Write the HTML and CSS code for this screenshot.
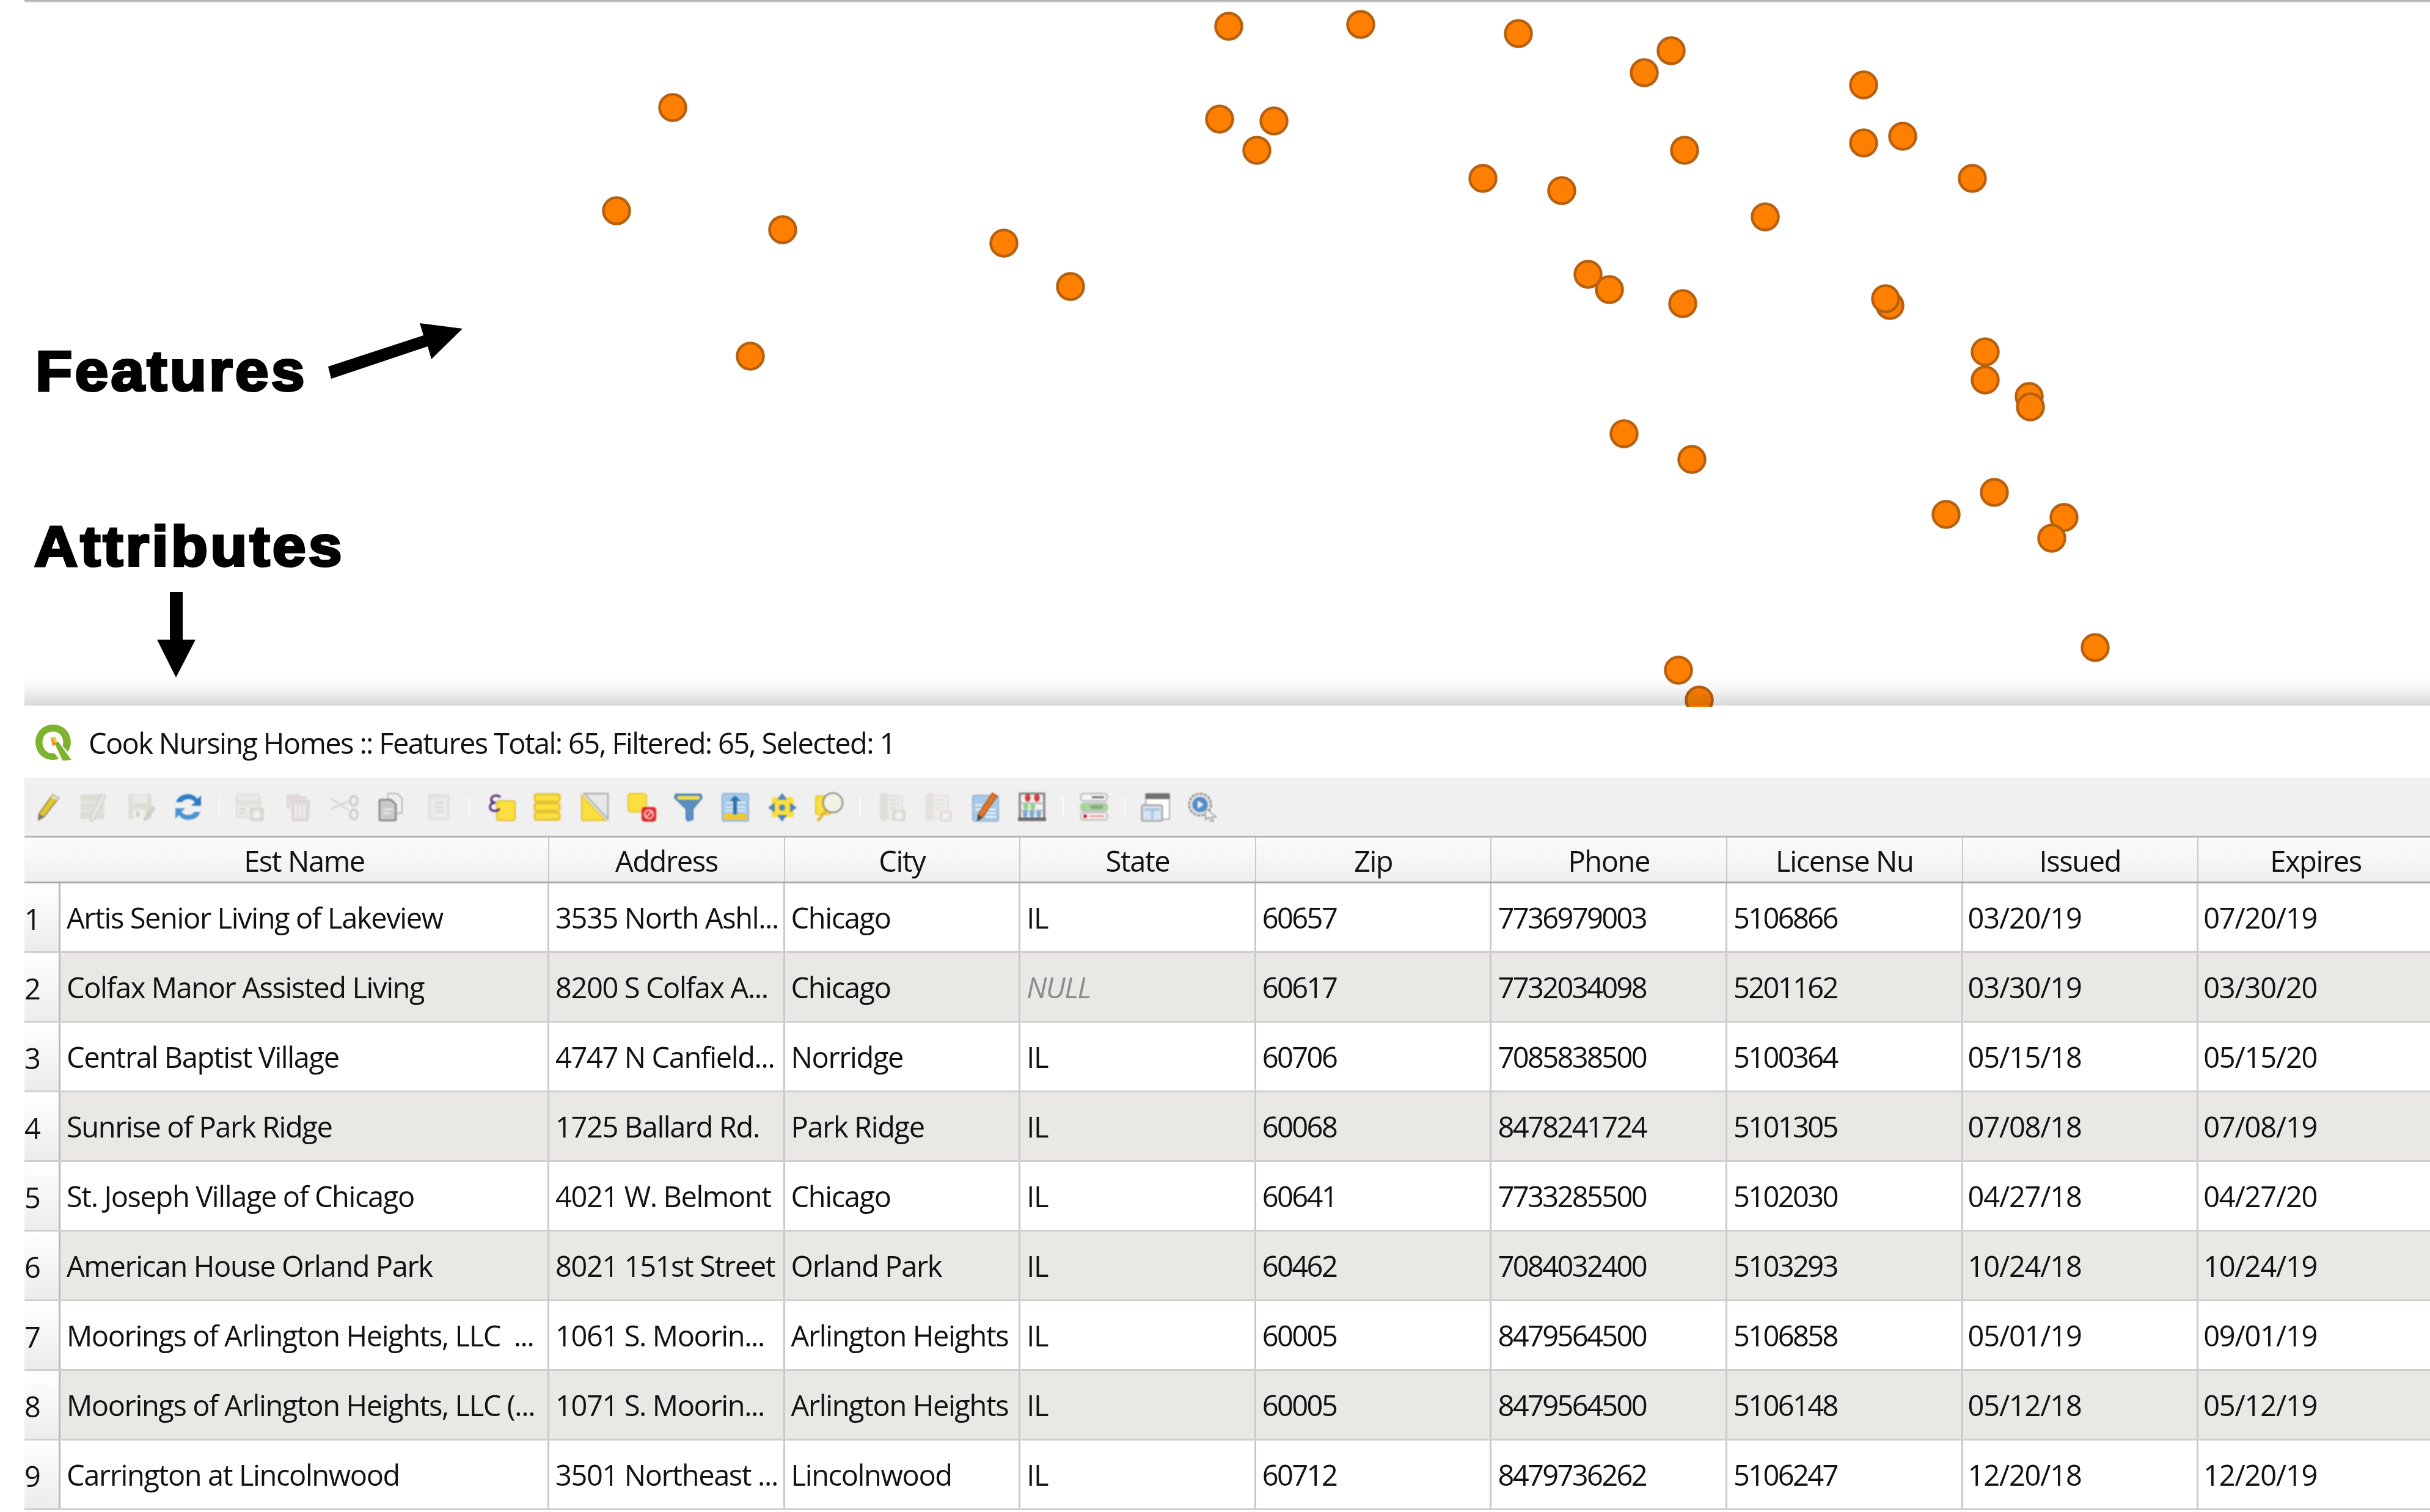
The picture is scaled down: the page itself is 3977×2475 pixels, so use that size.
FILE: index.html
```html
<!DOCTYPE html>
<html lang="en">
<head>
<meta charset="utf-8">
<title>Cook Nursing Homes</title>
<link rel="stylesheet" href="styles.css">
</head>
<body>
<div class="page">
  <section class="map">
    <svg class="map-points" viewBox="0 0 3977 1157" width="3977" height="1157" aria-hidden="true">
      <g class="points">
        <circle cx="2011" cy="43" r="21.500"/><circle cx="2227" cy="40" r="21.500"/><circle cx="2485" cy="55" r="21.500"/>
        <circle cx="2735" cy="83" r="21.500"/><circle cx="2691" cy="119" r="21.500"/><circle cx="3050" cy="139" r="21.500"/>
        <circle cx="1101" cy="176" r="21.500"/><circle cx="1996" cy="195" r="21.500"/><circle cx="2085" cy="198" r="21.500"/>
        <circle cx="2057" cy="246" r="21.500"/><circle cx="3050" cy="234" r="21.500"/><circle cx="3114" cy="223" r="21.500"/>
        <circle cx="2757" cy="246" r="21.500"/><circle cx="2427" cy="292" r="21.500"/><circle cx="2556" cy="312" r="21.500"/>
        <circle cx="3228" cy="292" r="21.500"/><circle cx="1009" cy="345" r="21.500"/><circle cx="1281" cy="376" r="21.500"/>
        <circle cx="2889" cy="355" r="21.500"/><circle cx="1643" cy="398" r="21.500"/><circle cx="1752" cy="469" r="21.500"/>
        <circle cx="2599" cy="449" r="21.500"/><circle cx="2634" cy="474" r="21.500"/><circle cx="2754" cy="497" r="21.500"/>
        <circle cx="3093" cy="500" r="21.500"/><circle cx="3086" cy="489" r="21.500"/><circle cx="1228" cy="583" r="21.500"/>
        <circle cx="3249" cy="576" r="21.500"/><circle cx="3249" cy="622" r="21.500"/><circle cx="3321" cy="649" r="21.500"/>
        <circle cx="3323" cy="666" r="21.500"/><circle cx="2658" cy="710" r="21.500"/><circle cx="2769" cy="752" r="21.500"/>
        <circle cx="3264" cy="806" r="21.500"/><circle cx="3185" cy="842" r="21.500"/><circle cx="3378" cy="847" r="21.500"/>
        <circle cx="3358" cy="881" r="21.500"/><circle cx="3429" cy="1060" r="21.500"/><circle cx="2747" cy="1097" r="21.500"/>
        <circle cx="2781" cy="1146" r="21.500"/>
      </g>
    </svg>
    <div class="map-shade"></div>
    <strong class="note note-features">Features</strong>
    <strong class="note note-attributes">Attributes</strong>
    <svg class="arrows" viewBox="0 0 800 1120" width="800" height="1120" aria-hidden="true">
      <polygon points="537,600 542,620 700,567 706,588 757,538 687,529 693,549"/>
      <polygon points="278,969 299,969 299,1047 320,1047 288,1109 257,1047 278,1047"/>
    </svg>
  </section>

  <section class="attr">
    <header class="attr-title">
      <svg class="qgis" viewBox="0 0 62 60" width="64" height="62" aria-hidden="true">
        <path d="M31 2C15 2 3 14 3 30s12 28 28 28c3 0 6-.5 9-1.500l-7-9c-1 .2-2 .3-3 .3-9 0-16-8-16-18S21 13 31 13s16 8 16 17c0 2-.4 4-1 6l8 9c3-4 5-9 5-15C59 14 47 2 31 2z" fill="#7fb22e"/>
        <path d="M27 22l9 11-6 3z" fill="#f0852a"/>
        <path d="M33 31l6-2 21 29-14 1z" fill="#7fb22e"/>
        <path d="M27 22l6 9 4-3-3-7z" fill="#f3c33c"/>
      </svg>
      <span class="title-text">Cook Nursing Homes :: Features Total: 65, Filtered: 65, Selected: 1</span>
    </header>

    <div class="toolbar">
      <svg class="ic" viewBox="0 0 51 48"><path d="M34 4l10 5-24 31-9 5 1-10z" fill="#e6c92e" stroke="#8f8446" stroke-width="2"/><path d="M11 35l9 5-9 6z" fill="#777"/><path d="M34 4l10 5-3 4-10-5z" fill="#ddd"/></svg>
      <svg class="ic dim" viewBox="0 0 51 48"><g fill="#dddcd2" stroke="#cfcec4"><rect x="3" y="4" width="38" height="11" rx="2"/><rect x="3" y="18" width="38" height="11" rx="2"/><rect x="3" y="32" width="38" height="11" rx="2"/></g><path d="M38 2l6 4-18 38-7 4 0-8z" fill="#e9e7e4" stroke="#c4c2bd" stroke-width="1.500"/></svg>
      <svg class="ic dim" viewBox="0 0 51 48"><rect x="4" y="3" width="38" height="41" rx="3" fill="#dbdad4"/><rect x="11" y="5" width="24" height="13" fill="#eaeae6"/><rect x="12" y="28" width="20" height="16" fill="#efefeb"/><rect x="17" y="31" width="5" height="9" fill="#c8c7c1"/><path d="M43 22l6 4-14 20-6 2 1-7z" fill="#cbc9c2"/></svg>
      <svg class="ic" viewBox="0 0 51 48"><path d="M25 3c7 0 12 3 15 8l6-6v17H30l6-6c-2-3-6-5-11-5-5 0-8 2-10 5H5C8 8 15 3 25 3z" fill="#2d7bc4"/><path d="M25 45c-7 0-12-3-15-8l-6 6V26h16l-6 6c2 3 6 5 11 5 5 0 8-2 10-5h10c-3 8-10 13-20 13z" fill="#4b92d4"/></svg>
      <i class="sep"></i>
      <svg class="ic dim" viewBox="0 0 51 48"><rect x="3" y="3" width="38" height="38" rx="3" fill="#e9e9e7" stroke="#d7d7d3" stroke-width="2"/><rect x="1" y="13" width="44" height="8" rx="2" fill="#dfded6"/><path d="M8 27h10M8 33h10" stroke="#cfcfca" stroke-width="3"/><rect x="25" y="25" width="23" height="22" rx="2" fill="#d6d5cb"/><path d="M36 29v14M29 36h14M31 31l10 10M41 31L31 41" stroke="#f4f4f0" stroke-width="3"/></svg>
      <svg class="ic dim" viewBox="0 0 51 48"><path d="M8 3h20l4 4h10v5H13v15H8z" fill="#dcd6d4"/><path d="M15 14h30v2l-2 30H18l-2-30z" fill="#e0d8d8" stroke="#d2c9c9" stroke-width="2"/><path d="M23 20v22M30 20v22M37 20v22" stroke="#f3f1f1" stroke-width="3"/></svg>
      <svg class="ic dim" viewBox="0 0 51 48"><path d="M4 10l28 19M4 27l28-12" stroke="#d4d4d0" stroke-width="3" fill="none"/><g fill="none" stroke="#c7c3c3" stroke-width="3.500"><ellipse cx="41" cy="14" rx="6" ry="8"/><ellipse cx="41" cy="36" rx="6" ry="8"/></g></svg>
      <svg class="ic" viewBox="0 0 51 48"><path d="M20 2h15l8 8v24H20z" fill="#f0f0f0" stroke="#b5b5b5" stroke-width="2"/><path d="M8 12h17l8 8v24a2 2 0 0 1-2 2H8a2 2 0 0 1-2-2V14a2 2 0 0 1 2-2z" fill="#c9c9c9" stroke="#7d7d7d" stroke-width="2.500"/><path d="M12 28h16M12 34h12" stroke="#eee" stroke-width="2.500"/></svg>
      <svg class="ic dim" viewBox="0 0 51 48"><rect x="8" y="2" width="36" height="44" rx="4" fill="#e0e0de"/><rect x="14" y="9" width="25" height="33" fill="#ecebe9"/><path d="M20 17h13M20 24h13M20 31h13" stroke="#d4d4d1" stroke-width="3"/></svg>
      <i class="sep"></i>
      <svg class="ic" viewBox="0 0 51 48"><rect x="20" y="14" width="30" height="32" rx="3" fill="#fbde3f" stroke="#e0bd2c" stroke-width="2"/><path d="M25 7c-5-3-13-2-14 4-.6 4 3 6 7 6-5 0-9 2-9 7 0 7 9 8 15 4" fill="none" stroke="#5a2d82" stroke-width="3.500" stroke-linecap="round"/></svg>
      <svg class="ic" viewBox="0 0 51 48"><g fill="#fbde3f" stroke="#e2bf2e" stroke-width="3"><rect x="5" y="3" width="41" height="12" rx="3"/><rect x="5" y="18" width="41" height="12" rx="3"/><rect x="5" y="33" width="41" height="12" rx="3"/></g></svg>
      <svg class="ic" viewBox="0 0 51 48"><path d="M9 2h39v42z" fill="#e8e8e8" stroke="#aaa" stroke-width="2.500"/><path d="M5 5l39 41H7a2 2 0 0 1-2-2z" fill="#fbde3f" stroke="#e2bf2e" stroke-width="2"/></svg>
      <svg class="ic" viewBox="0 0 51 48"><rect x="4" y="2" width="30" height="30" rx="4" fill="#fbde3f" stroke="#e5c533" stroke-width="2"/><rect x="26" y="24" width="24" height="24" rx="5" fill="#dc2a2e"/><circle cx="38" cy="36" r="7" fill="none" stroke="#f6c9c9" stroke-width="2.500"/><path d="M33 41l10-10" stroke="#f6c9c9" stroke-width="2.500"/></svg>
      <svg class="ic" viewBox="0 0 51 48"><path d="M5 3h41l2 6-15 18v17l-8 3-3-4V27L3 9z" fill="#5b8fc2" stroke="#4d7fb0" stroke-width="2"/><rect x="8" y="6" width="36" height="6" fill="#f7e043"/></svg>
      <svg class="ic" viewBox="0 0 51 48"><rect x="4" y="2" width="43" height="45" rx="3" fill="#a9c9e9" stroke="#8fb3d6" stroke-width="2"/><rect x="6" y="35" width="39" height="10" fill="#ecca35"/><path d="M9 17h33M9 24h33M9 30h33" stroke="#e8f0f8" stroke-width="2"/><path d="M25 5l9 9h-6v22h-6V14h-6z" fill="#2f6ea8"/></svg>
      <svg class="ic" viewBox="0 0 51 48"><rect x="8" y="8" width="36" height="33" rx="3" fill="#fbde3f"/><g fill="#4f84bd"><path d="M25 1l8 11H17z"/><path d="M25 48l8-11H17z"/><path d="M2 25l11-8v16z"/><path d="M49 25l-11-8v16z"/></g><circle cx="25" cy="25" r="5" fill="#4f84bd"/></svg>
      <svg class="ic" viewBox="0 0 51 48"><rect x="3" y="6" width="24" height="30" rx="3" fill="#fbde3f" stroke="#e3c02f" stroke-width="2"/><circle cx="31" cy="17" r="16" fill="#f3f2e6" stroke="#8a8a7e" stroke-width="2.500"/><path d="M20 30L6 47" stroke="#e3b92d" stroke-width="4.500"/></svg>
      <i class="sep"></i>
      <svg class="ic dim" viewBox="0 0 51 48"><rect x="8" y="5" width="36" height="38" fill="#e9e9e7" stroke="#dcdcd8" stroke-width="2"/><rect x="9" y="1" width="11" height="46" rx="4" fill="#dedcd6"/><path d="M24 12h15M24 19h15M24 26h8" stroke="#d6d6d2" stroke-width="2"/><rect x="28" y="29" width="21" height="18" rx="2" fill="#d6d5cb"/><path d="M38 31v14M31 38h14M33 33l10 10M43 33L33 43" stroke="#f5f5f1" stroke-width="2.500"/></svg>
      <svg class="ic dim" viewBox="0 0 51 48"><rect x="6" y="5" width="36" height="38" fill="#ececea" stroke="#dedcdc" stroke-width="2"/><rect x="7" y="1" width="11" height="46" rx="4" fill="#e4dfdd"/><path d="M22 12h15M22 19h15M22 26h8" stroke="#dcdcd8" stroke-width="2"/><rect x="28" y="30" width="20" height="18" rx="2" fill="#e3d9d8"/><path d="M33 34l10 10M43 34L33 44" stroke="#f8f6f6" stroke-width="4"/></svg>
      <svg class="ic" viewBox="0 0 51 48"><rect x="5" y="5" width="42" height="42" rx="3" fill="#a9c9e9" stroke="#8fb3d6" stroke-width="2"/><path d="M9 21h12M9 28h10M26 34h17M26 40h17M30 28h13" stroke="#f1f6fb" stroke-width="2.500"/><path d="M37 1l8 5-24 35-8 5 1-10z" fill="#e4762a" stroke="#9d4f1a" stroke-width="1.500"/><path d="M13 36l8 5-8 6z" fill="#444"/></svg>
      <svg class="ic" viewBox="0 0 51 48"><rect x="5" y="2" width="40" height="42" fill="#efefef" stroke="#777" stroke-width="3"/><rect x="2" y="41" width="46" height="6" fill="#6c6c6c"/><path d="M5 18h40M5 30h40" stroke="#aaa" stroke-width="2"/><g fill="#d03b3d"><ellipse cx="18" cy="9" rx="4.500" ry="6.500"/><ellipse cx="33" cy="9" rx="4.500" ry="6.500"/></g><g fill="#8fd088"><ellipse cx="15" cy="23" rx="4" ry="6"/><ellipse cx="26" cy="23" rx="4" ry="6"/></g><g fill="#7aa9d6"><ellipse cx="14" cy="35" rx="4" ry="6"/><ellipse cx="25" cy="35" rx="4" ry="6"/><ellipse cx="36" cy="35" rx="4" ry="6"/></g></svg>
      <i class="sep"></i>
      <svg class="ic" viewBox="0 0 51 48"><g stroke="#bdbdbd" stroke-width="2.500"><rect x="4" y="2" width="43" height="12" rx="4" fill="#f5f5f5"/><rect x="4" y="18" width="43" height="12" rx="4" fill="#9fdc93"/><rect x="4" y="33" width="43" height="12" rx="4" fill="#f5f5f5"/></g><path d="M22 8h20" stroke="#666" stroke-width="3"/><path d="M20 24h20" stroke="#8aa585" stroke-width="6"/><circle cx="11" cy="39" r="3" fill="#c4161c"/><path d="M17 39h25" stroke="#f39aa0" stroke-width="3"/></svg>
      <i class="sep"></i>
      <svg class="ic" viewBox="0 0 51 48"><rect x="9" y="2" width="39" height="42" rx="2" fill="#fff" stroke="#aaa" stroke-width="2"/><rect x="9" y="2" width="39" height="9" fill="#707070"/><rect x="3" y="21" width="33" height="26" rx="3" fill="#d7e5f2" stroke="#a5a5a5" stroke-width="3"/><path d="M7 28h25M20 28v16" stroke="#a6c4e0" stroke-width="4"/></svg>
      <svg class="ic" viewBox="0 0 51 48"><circle cx="21" cy="20" r="18" fill="#e3e3e3" stroke="#8c8c8c" stroke-width="3" stroke-dasharray="5 2"/><circle cx="21" cy="20" r="12.500" fill="#4f8cc9"/><path d="M17 13l10 7-10 7z" fill="#eef"/><path d="M30 26l17 14-8 1 4 6-4 1-4-7-5 4z" fill="#f4f4f4" stroke="#8b8b8b" stroke-width="1.500"/></svg>
    </div>

    <div class="grid">
      <div class="row head">
        <div class="corner"></div>
        <div class="th">Est Name</div><div class="th">Address</div><div class="th">City</div><div class="th">State</div><div class="th">Zip</div><div class="th">Phone</div><div class="th">License Nu</div><div class="th">Issued</div><div class="th">Expires</div>
      </div>
      <div class="row">
        <div class="num">1</div><div class="td">Artis Senior Living of Lakeview</div><div class="td">3535 North Ashl...</div><div class="td">Chicago</div><div class="td">IL</div><div class="td">60657</div><div class="td">7736979003</div><div class="td">5106866</div><div class="td">03/20/19</div><div class="td">07/20/19</div>
      </div>
      <div class="row alt">
        <div class="num">2</div><div class="td">Colfax Manor Assisted Living</div><div class="td">8200 S Colfax A...</div><div class="td">Chicago</div><div class="td null">NULL</div><div class="td">60617</div><div class="td">7732034098</div><div class="td">5201162</div><div class="td">03/30/19</div><div class="td">03/30/20</div>
      </div>
      <div class="row">
        <div class="num">3</div><div class="td">Central Baptist Village</div><div class="td">4747 N Canfield...</div><div class="td">Norridge</div><div class="td">IL</div><div class="td">60706</div><div class="td">7085838500</div><div class="td">5100364</div><div class="td">05/15/18</div><div class="td">05/15/20</div>
      </div>
      <div class="row alt">
        <div class="num">4</div><div class="td">Sunrise of Park Ridge</div><div class="td">1725 Ballard Rd.</div><div class="td">Park Ridge</div><div class="td">IL</div><div class="td">60068</div><div class="td">8478241724</div><div class="td">5101305</div><div class="td">07/08/18</div><div class="td">07/08/19</div>
      </div>
      <div class="row">
        <div class="num">5</div><div class="td">St. Joseph Village of Chicago</div><div class="td">4021 W. Belmont</div><div class="td">Chicago</div><div class="td">IL</div><div class="td">60641</div><div class="td">7733285500</div><div class="td">5102030</div><div class="td">04/27/18</div><div class="td">04/27/20</div>
      </div>
      <div class="row alt">
        <div class="num">6</div><div class="td">American House Orland Park</div><div class="td">8021 151st Street</div><div class="td">Orland Park</div><div class="td">IL</div><div class="td">60462</div><div class="td">7084032400</div><div class="td">5103293</div><div class="td">10/24/18</div><div class="td">10/24/19</div>
      </div>
      <div class="row">
        <div class="num">7</div><div class="td">Moorings of Arlington Heights, LLC &nbsp;...</div><div class="td">1061 S. Moorin...</div><div class="td">Arlington Heights</div><div class="td">IL</div><div class="td">60005</div><div class="td">8479564500</div><div class="td">5106858</div><div class="td">05/01/19</div><div class="td">09/01/19</div>
      </div>
      <div class="row alt">
        <div class="num">8</div><div class="td">Moorings of Arlington Heights, LLC (...</div><div class="td">1071 S. Moorin...</div><div class="td">Arlington Heights</div><div class="td">IL</div><div class="td">60005</div><div class="td">8479564500</div><div class="td">5106148</div><div class="td">05/12/18</div><div class="td">05/12/19</div>
      </div>
      <div class="row">
        <div class="num">9</div><div class="td">Carrington at Lincolnwood</div><div class="td">3501 Northeast ...</div><div class="td">Lincolnwood</div><div class="td">IL</div><div class="td">60712</div><div class="td">8479736262</div><div class="td">5106247</div><div class="td">12/20/18</div><div class="td">12/20/19</div>
      </div>
    </div>
  </section>
</div>
</body>
</html>
```
FILE: styles.css
```css
* { box-sizing: border-box; }
html, body { margin: 0; padding: 0; background: #fff; }
.page {
  width: 3977px;
  height: 2475px;
  overflow: hidden;
  display: flex;
  flex-direction: column;
  font-family: "Open Sans", "Liberation Sans", sans-serif;
  font-size: 47px;
  letter-spacing: -1.4px;
  color: #111;
}

/* Map canvas */
.map {
  position: relative;
  height: 1157px;
  flex: none;
  overflow: hidden;
}
.map::before {
  content: "";
  position: absolute;
  left: 40px;
  right: 0;
  top: 0;
  height: 4px;
  background: linear-gradient(#a9a9a9, #d9d9d9);
}
.map-points { position: absolute; left: 0; top: 0; }
.points {
  fill: #ff8000;
  stroke: #b8600f;
  stroke-width: 4.5px;
  filter: blur(.7px);
}
.map-shade {
  position: absolute;
  left: 40px;
  right: 0;
  bottom: 2px;
  height: 45px;
  background: linear-gradient(#fff, #f3f3f3 45%, #d8d8d8);
  mix-blend-mode: multiply;
}
.note {
  position: absolute;
  font-family: "Liberation Sans", sans-serif;
  font-weight: 700;
  font-size: 93px;
  line-height: 93px;
  letter-spacing: 4px;
  white-space: nowrap;
  color: #000;
  -webkit-text-stroke: 4px #000;
  transform-origin: left center;
  transform: scaleX(1.06);
}
.note-features { left: 58px; top: 561px; }
.note-attributes { left: 56px; top: 848px; }
.arrows { position: absolute; left: 0; top: 0; fill: #000; }

/* Attribute table window */
.attr {
  flex: 1;
  margin-left: 40px;
  display: flex;
  flex-direction: column;
  min-height: 0;
}
.attr-title {
  height: 116px;
  flex: none;
  display: flex;
  align-items: center;
  gap: 26px;
  padding: 0 0 0 15px;
  background: #fff;
}
.title-text { padding-top: 2px; letter-spacing: -1.65px; }
.qgis { flex: none; }

.toolbar {
  height: 95px;
  flex: none;
  display: flex;
  align-items: center;
  gap: 26px;
  padding: 0 0 0 12px;
  background: #f0f0f0;
}
.ic {
  width: 51px;
  height: 48px;
  flex: none;
  filter: blur(.8px);
}
.dim { opacity: .85; }
.sep {
  width: 2px;
  height: 34px;
  margin: 0 -2px;
  flex: none;
  background: #fbfbfb;
}

.grid { flex: 1; min-height: 0; display: flex; flex-direction: column; }
.row {
  display: grid;
  grid-template-columns: 59px 800px repeat(8, 385.6px);
  height: 114px;
  flex: none;
  border-bottom: 3px solid #cfcfcf;
}
.row.head {
  height: 78px;
  border-top: 3px solid #b4b4b4;
  border-bottom: 3px solid #a9a9a9;
  background: linear-gradient(#fcfcfc, #efefef);
}
.row.alt { background: #e9e8e5; }
.th, .td {
  display: flex;
  align-items: center;
  white-space: nowrap;
  overflow: hidden;
  border-right: 3px solid #c9c9c9;
}
.th { justify-content: center; border-right-width: 2px; padding-top: 3px; }
.td { padding-left: 10px; }
.td:nth-child(6), .td:nth-child(7), .td:nth-child(8) { letter-spacing: -2.6px; }
.td:nth-child(9), .td:nth-child(10) { letter-spacing: -1.2px; padding-left: 8px; }
.num {
  display: flex;
  align-items: center;
  padding-top: 4px;
  overflow: hidden;
  background: linear-gradient(#fff, #ececec);
  border-right: 3px solid #b9b9b9;
}
.null { font-style: italic; color: #8c8c8c; }
```
